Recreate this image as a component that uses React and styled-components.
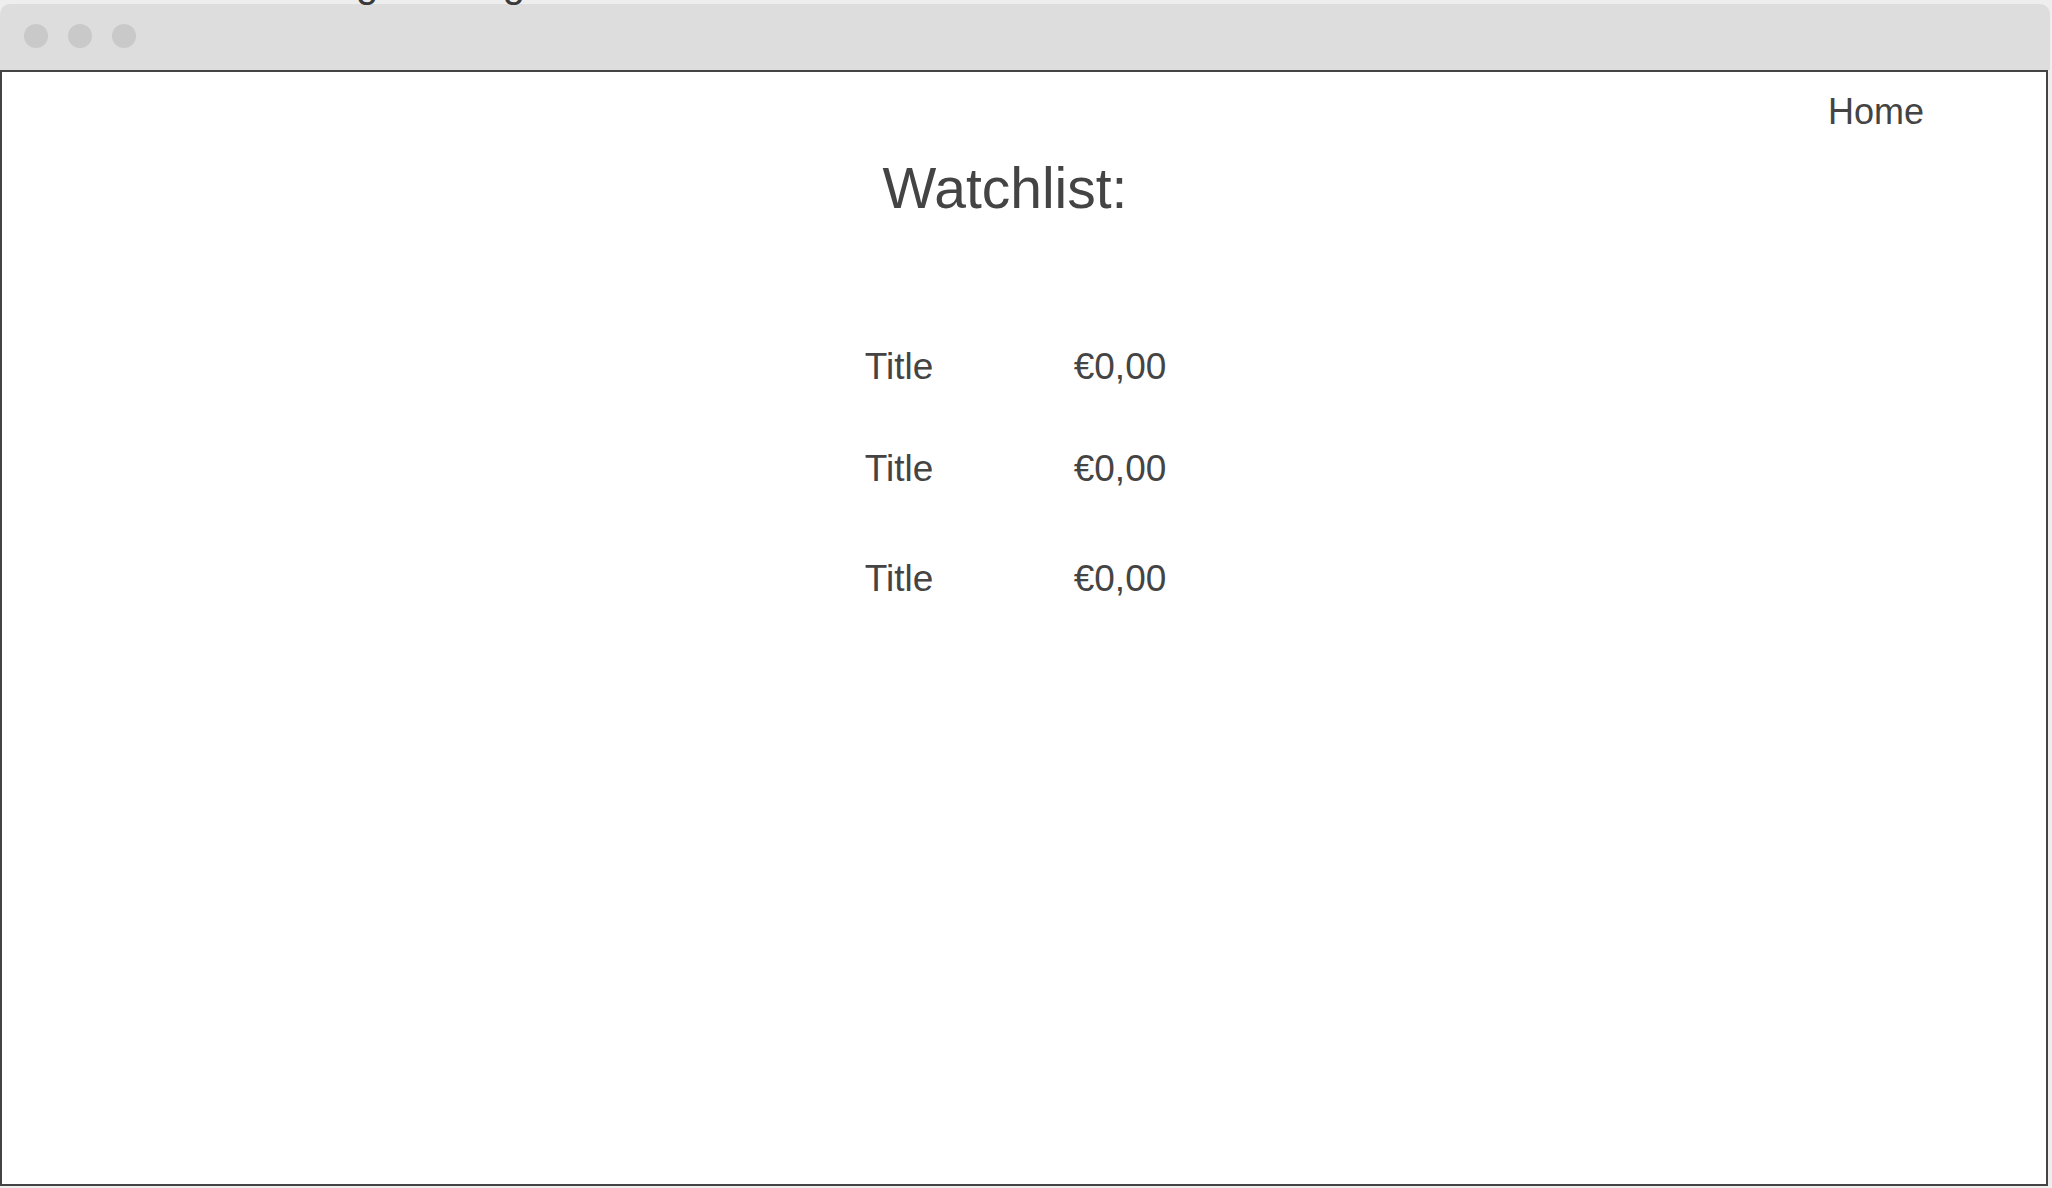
import React from "react";
import styled, { createGlobalStyle } from "styled-components";

const GlobalStyle = createGlobalStyle`
  html, body {
    margin: 0;
    padding: 0;
    background: #eeeeee;
    font-family: "Liberation Sans", Arial, sans-serif;
    color: #444444;
  }
  * { box-sizing: border-box; }
`;

const Stage = styled.div`
  position: relative;
  width: 2052px;
  height: 1188px;
  overflow: hidden;
  background: #eeeeee;
`;

const SketchLabel = styled.div`
  position: absolute;
  left: 239px;
  top: -37px;
  font-size: 40px;
  line-height: 40px;
  color: #3a3a3a;
  white-space: nowrap;
  z-index: 2;
`;

const Window = styled.div`
  width: 2050px;
  padding-top: 4px;
`;

const TitleBar = styled.div`
  height: 66px;
  background: #dddddd;
  border-radius: 10px 10px 0 0;
  display: flex;
  align-items: center;
  gap: 20px;
  padding: 0 0 2px 24px;
`;

const Dot = styled.span`
  width: 24px;
  height: 24px;
  border-radius: 50%;
  background: #c9c9c9;
`;

const Viewport = styled.div`
  width: 2048px;
  height: 1116px;
  border: 2px solid #444444;
  background: #ffffff;
  display: flex;
  flex-direction: column;
`;

const Nav = styled.nav`
  display: flex;
  justify-content: flex-end;
  padding: 20px 122px 0 0;
`;

const NavLink = styled.a`
  font-size: 36px;
  line-height: 40px;
  color: #444444;
  text-decoration: none;
`;

const Main = styled.main`
  display: flex;
  flex-direction: column;
  align-items: center;
  padding-right: 38px;
`;

const Heading = styled.h1`
  margin: 24px 0 0;
  font-size: 57px;
  line-height: 64px;
  font-weight: 400;
  color: #444444;
`;

const List = styled.div`
  margin: 127px 0 0 21px;
  display: flex;
  flex-direction: column;
`;

const Row = styled.div`
  display: grid;
  grid-template-columns: 209px auto;
  margin-top: ${(p) => p.$top}px;
  font-size: 37px;
  line-height: 40px;
  color: #444444;
`;

const Cell = styled.span``;

const items = [
  { title: "Title", price: "€0,00", top: 0 },
  { title: "Title", price: "€0,00", top: 62 },
  { title: "Title", price: "€0,00", top: 70 },
];

export default function App() {
  return (
    <>
      <GlobalStyle />
      <Stage>
        <SketchLabel>Viewing a listing</SketchLabel>
        <Window>
          <TitleBar>
            <Dot />
            <Dot />
            <Dot />
          </TitleBar>
          <Viewport>
            <Nav>
              <NavLink href="#">Home</NavLink>
            </Nav>
            <Main>
              <Heading>Watchlist:</Heading>
              <List>
                {items.map((it, i) => (
                  <Row key={i} $top={it.top}>
                    <Cell>{it.title}</Cell>
                    <Cell>{it.price}</Cell>
                  </Row>
                ))}
              </List>
            </Main>
          </Viewport>
        </Window>
      </Stage>
    </>
  );
}
